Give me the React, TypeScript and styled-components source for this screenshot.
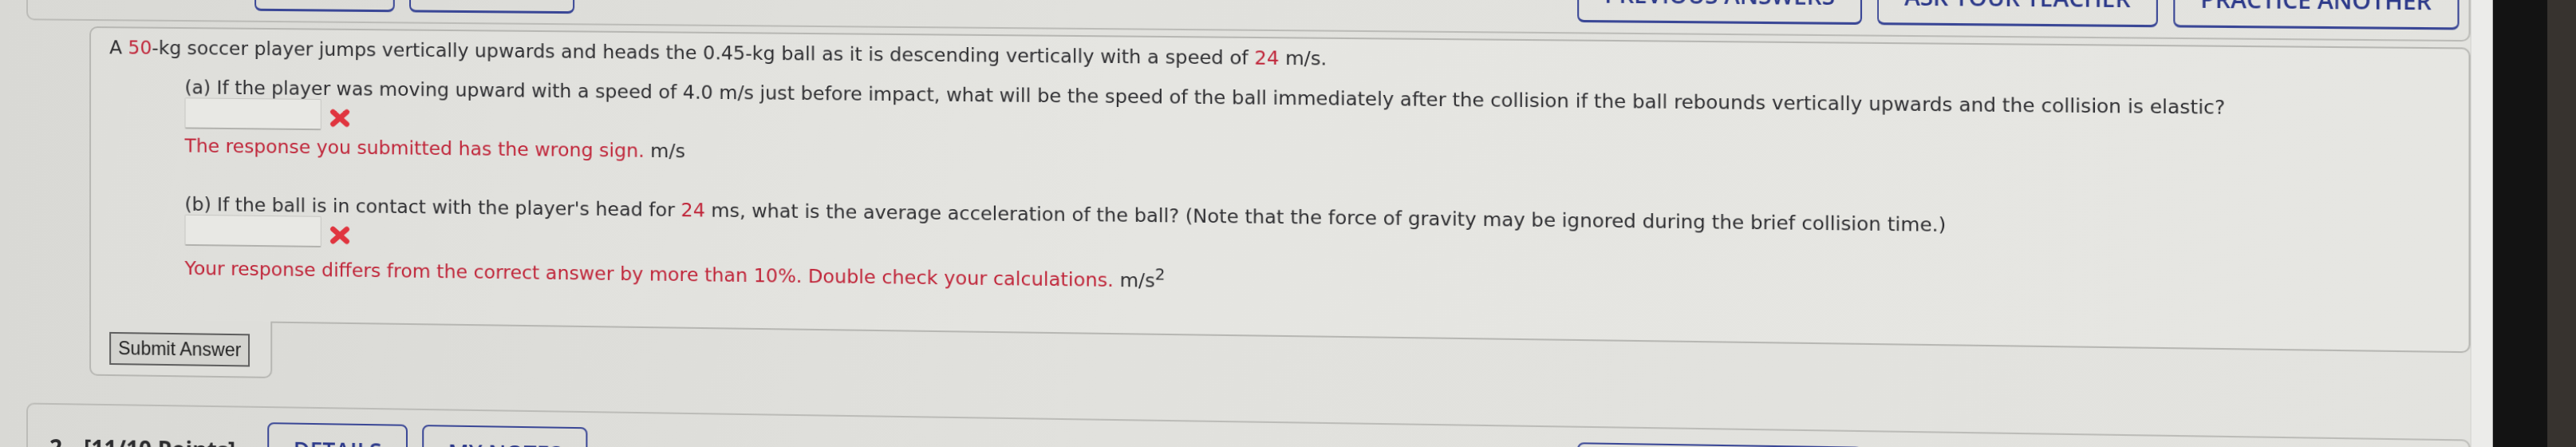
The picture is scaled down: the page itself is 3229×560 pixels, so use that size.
import React from 'react';
import styled, { createGlobalStyle } from 'styled-components';

// Photo of a WebAssign question on a monitor. The camera looks at the screen
// slightly from the left, so the frame gets a small perspective turn.

const GlobalStyle = createGlobalStyle`
  html, body {
    margin: 0;
    padding: 0;
    overflow: hidden;
  }
  body {
    width: 3229px;
    height: 560px;
    background: linear-gradient(90deg, #dadad6 0, #e2e2de 1600px, #e3e3df 3122px, #141414 3123px, #141414 3191px, #37332f 3192px);
    font-family: "DejaVu Sans", Verdana, sans-serif;
  }
`;

const Frame = styled.div`
  display: flex;
  width: 3290px;
  height: 780px;
  margin-top: -120px;
  transform: perspective(3000px) rotateY(-2.235deg);
  transform-origin: 0 -530px;
`;

const Screen = styled.div`
  width: 3005px;
  flex: none;
  display: flex;
  background: linear-gradient(90deg, #d9d9d5 0%, #e1e1dd 45%, #e3e3df 100%);
  overflow: hidden;
`;

const Page = styled.div`
  width: 2979px;
  flex: none;
  box-sizing: border-box;
  padding: 41px 0 0 33px;
  display: flex;
  flex-direction: column;
`;

const Scrollbar = styled.div`
  width: 25px;
  flex: none;
  background: #ececea;
  border-left: 1px solid #d3d3cf;
`;

const Bezel = styled.div`
  width: 63px;
  flex: none;
  background: #131313;
`;

const Backdrop = styled.div`
  width: 222px;
  flex: none;
  background: #37332f;
`;

const QuestionHeader = styled.div<{ $gap?: number }>`
  display: flex;
  align-items: center;
  margin-top: ${p => p.$gap ?? 0}px;
  padding: 18px 11px 12px 27px;
  border: 2px solid #bcbcb8;
  border-radius: 10px;
`;

const QuestionNumber = styled.span`
  font-family: "Open Sans", sans-serif;
  font-weight: 700;
  font-size: 28px;
  color: #2c2c2e;
  margin-right: 19px;
`;

const Points = styled.span`
  font-family: "Open Sans", sans-serif;
  font-weight: 700;
  font-size: 28px;
  color: #2c2c2e;
  margin-right: 40px;
`;

const ButtonGroup = styled.div<{ $right?: boolean }>`
  display: flex;
  gap: 18px;
  margin-left: ${p => (p.$right ? 'auto' : '0')};
`;

const HeaderButton = styled.div`
  height: 70px;
  box-sizing: border-box;
  display: flex;
  align-items: center;
  padding: 0 30px;
  border: 2px solid #3a4796;
  border-bottom-width: 3px;
  border-radius: 8px;
  font-family: "Open Sans", sans-serif;
  font-weight: 600;
  font-size: 28px;
  line-height: 1;
  color: #2d3a8a;
  white-space: nowrap;
`;

const QuestionCode = styled.span`
  font-family: "Open Sans", sans-serif;
  font-weight: 600;
  font-size: 24px;
  color: #333;
  margin-left: 40px;
`;

const QuestionBody = styled.div`
  padding-left: 79px;
`;

const Panel = styled.div`
  margin-top: 7px;
  padding: 10px 23px 52px;
  border: 2px solid #b7b7b3;
  border-radius: 10px 10px 10px 0;
  background: linear-gradient(90deg, #dededa 0%, #e5e5e1 45%, #e6e6e2 100%);
  color: #303033;
  font-size: 23.3px;
  line-height: 27px;
`;

const Paragraph = styled.div<{ $top?: number; $indent?: number }>`
  margin: ${p => p.$top ?? 0}px 0 0 ${p => p.$indent ?? 0}px;
  white-space: nowrap;
`;

const Red = styled.span`
  color: #c0263a;
`;

const AnswerRow = styled.div`
  display: flex;
  align-items: flex-end;
  gap: 10px;
  margin-left: 94px;
`;

const AnswerInput = styled.div`
  width: 170px;
  height: 39px;
  box-sizing: border-box;
  border: 1px solid #c7c7c3;
  border-bottom: 2px solid #b2b2ae;
  border-radius: 2px;
  background: #e8e8e4;
`;

const WrongMark = styled.svg`
  width: 26px;
  height: 23px;
  margin-bottom: 4px;
`;

const SubmitTab = styled.div`
  width: 228px;
  box-sizing: border-box;
  margin-top: -2px;
  padding: 16px 0 12px 23px;
  border: 2px solid #b7b7b3;
  border-top: none;
  border-radius: 0 0 10px 10px;
  background: #dededa;
`;

const SubmitButton = styled.div`
  display: inline-flex;
  align-items: center;
  height: 41px;
  box-sizing: border-box;
  padding: 0 9px;
  border: 2px solid #5e5e5e;
  background: #d3d3cf;
  font-family: "Liberation Sans", Arial, sans-serif;
  font-size: 23px;
  color: #222;
  white-space: nowrap;
`;

const Cross = () => (
  <WrongMark viewBox="0 0 26 23">
    <path d="M4.5 4 L21.5 19 M21.5 4 L4.5 19" stroke="#e0353f" strokeWidth="6.6" strokeLinecap="round" />
  </WrongMark>
);

const Header = ({ num, points, code, top }: { num: string; points: string; code?: string; top?: number }) => (
  <QuestionHeader $gap={top}>
    <QuestionNumber>{num}</QuestionNumber>
    <Points>{points}</Points>
    <ButtonGroup>
      <HeaderButton>DETAILS</HeaderButton>
      <HeaderButton>MY NOTES</HeaderButton>
    </ButtonGroup>
    {code && <QuestionCode>{code}</QuestionCode>}
    <ButtonGroup $right>
      <HeaderButton>PREVIOUS ANSWERS</HeaderButton>
      <HeaderButton>ASK YOUR TEACHER</HeaderButton>
      <HeaderButton>PRACTICE ANOTHER</HeaderButton>
    </ButtonGroup>
  </QuestionHeader>
);

export default function App() {
  return (
    <>
      <GlobalStyle />
      <Frame>
        <Screen>
          <Page>
            <Header num="1." points="[0/10 Points]" code="SERCP11 6.3.P.017." />
            <QuestionBody>
              <Panel>
                <Paragraph>
                  A <Red>50</Red>-kg soccer player jumps vertically upwards and heads the 0.45-kg ball as it is descending vertically with a speed of <Red>24</Red> m/s.
                </Paragraph>
                <Paragraph $top={22} $indent={94}>
                  (a) If the player was moving upward with a speed of 4.0 m/s just before impact, what will be the speed of the ball immediately after the collision if the ball rebounds vertically upwards and the collision is elastic?
                </Paragraph>
                <AnswerRow>
                  <AnswerInput />
                  <Cross />
                </AnswerRow>
                <Paragraph $top={7} $indent={94}>
                  <Red>The response you submitted has the wrong sign.</Red> m/s
                </Paragraph>
                <Paragraph $top={46} $indent={94}>
                  (b) If the ball is in contact with the player's head for <Red>24</Red> ms, what is the average acceleration of the ball? (Note that the force of gravity may be ignored during the brief collision time.)
                </Paragraph>
                <AnswerRow>
                  <AnswerInput />
                  <Cross />
                </AnswerRow>
                <Paragraph $top={7} $indent={94}>
                  <Red>Your response differs from the correct answer by more than 10%. Double check your calculations.</Red> m/s<sup>2</sup>
                </Paragraph>
              </Panel>
              <SubmitTab>
                <SubmitButton>Submit Answer</SubmitButton>
              </SubmitTab>
            </QuestionBody>
            <Header num="2." points="[11/10 Points]" code="SERCP11 6.3.P.019." top={35} />
          </Page>
          <Scrollbar />
        </Screen>
        <Bezel />
        <Backdrop />
      </Frame>
    </>
  );
}
